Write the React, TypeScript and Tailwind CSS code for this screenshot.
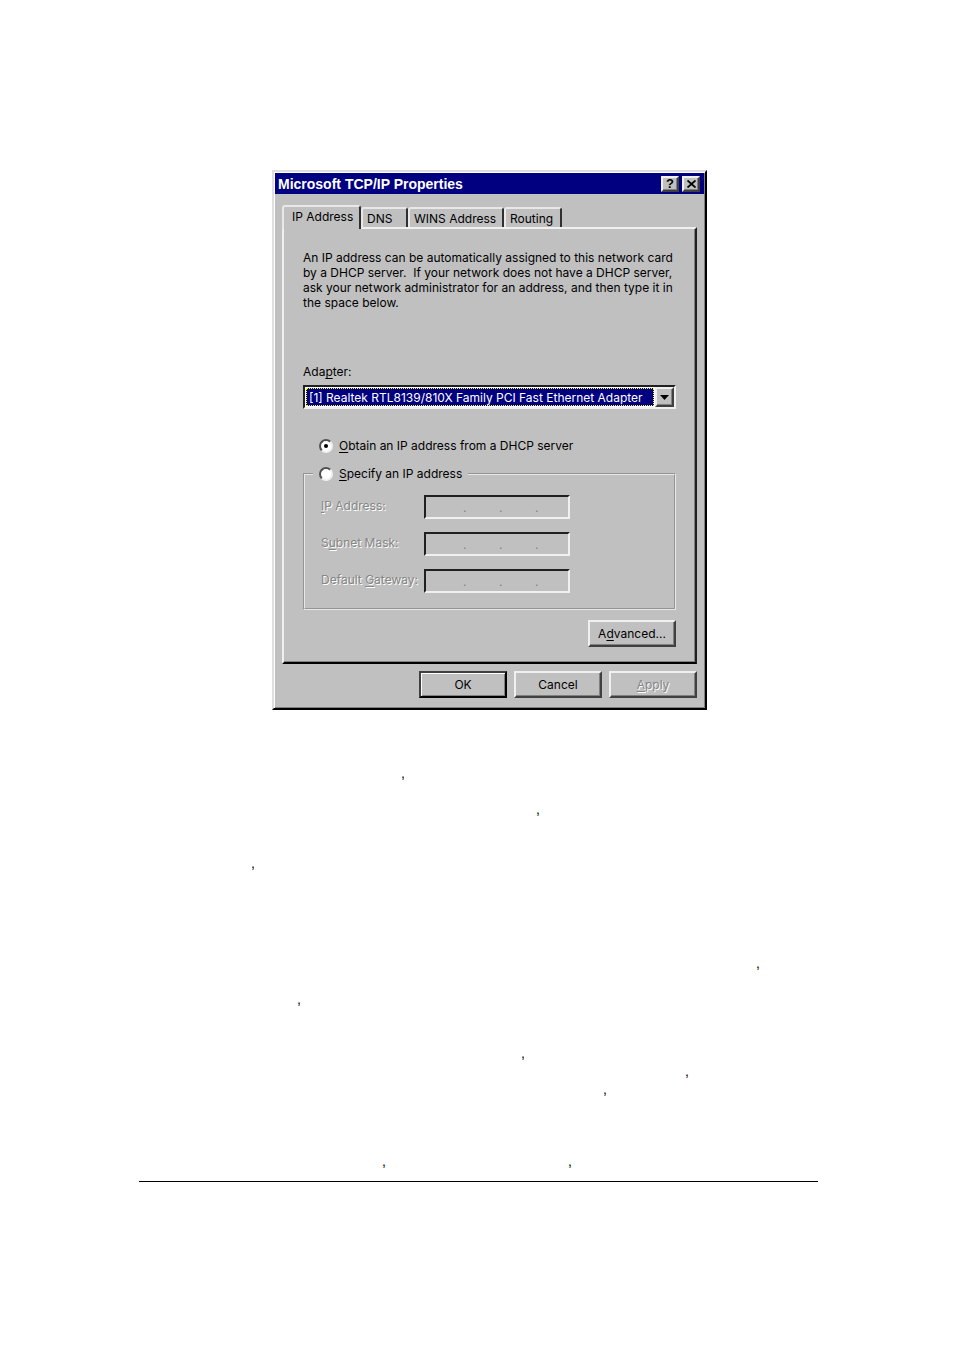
import { useState } from "react";
import clsx from "clsx";

const raised = "border-2 border-t-[#f0f0f0] border-l-[#f0f0f0] border-r-[#404040] border-b-[#404040] shadow-[inset_-1px_-1px_0_#808080]";
const sunken = "border-2 border-t-[#202020] border-l-[#202020] border-r-[#f0f0f0] border-b-[#f0f0f0]";
const etched = "text-[#868686] [text-shadow:1px_1px_0_#ffffff]";

const tabs = [
  { label: "IP Address", width: "w-[79px]" },
  { label: "DNS", width: "w-[47px]" },
  { label: "WINS Address", width: "w-[96px]" },
  { label: "Routing", width: "w-[58px]" },
];

const fields = [
  { id: "ip", before: "", key: "I", after: "P Address:" },
  { id: "mask", before: "S", key: "u", after: "bnet Mask:" },
  { id: "gateway", before: "Default ", key: "G", after: "ateway:" },
];

// gap in front of every comma on a line, an empty list is a blank line
const noteLines: number[][] = [[262], [], [397], [], [], [112]];
const footLines: number[][] = [[617], [], [158], [], [], [382], [546], [464], [], [], [], [243, 182]];

function Lines({ lines }: { lines: number[][] }) {
  return (
    <div className="font-['Liberation_Sans',Arial,sans-serif] text-[14px] leading-[18px]">
      {lines.map((gaps, i) => (
        <p key={i} className="flex h-[18px]">
          {gaps.map((gap, j) => (
            <span key={j} style={{ marginLeft: gap }}>
              ,
            </span>
          ))}
        </p>
      ))}
    </div>
  );
}

function Key({ children }: { children: string }) {
  return <span className="underline underline-offset-2">{children}</span>;
}

function TitleBar() {
  return (
    <div className="flex h-[21px] items-center gap-[3px] bg-[#000080] pl-[3px] pr-1 font-['Liberation_Sans',Arial,sans-serif]">
      <h1 className="flex-1 text-[14px] font-bold leading-[18px] text-white">Microsoft TCP/IP Properties</h1>
      <button aria-label="Help" className={clsx("flex h-4 w-[18px] items-center justify-center bg-[#c0c0c0] text-[13px] font-bold leading-3", raised)}>
        ?
      </button>
      <button aria-label="Close" className={clsx("flex h-4 w-[18px] items-center justify-center bg-[#c0c0c0]", raised)}>
        <svg width="9" height="8" viewBox="0 0 9 8" stroke="#000" strokeWidth="1.8">
          <path d="M0.5 0.5L8.5 7.5M8.5 0.5L0.5 7.5" />
        </svg>
      </button>
    </div>
  );
}

function Octets({ id }: { id: string }) {
  return (
    <div className={clsx("flex h-[24px] w-[146px] items-center pl-1", sunken)}>
      {[0, 1, 2, 3].map((n) => (
        <div key={n} className="flex items-center text-[#808080]">
          <input id={`${id}-${n}`} aria-label={`Octet ${n + 1}`} disabled className="h-[18px] w-[33px] bg-transparent text-center" />
          {n < 3 && <span className="w-[3px]">.</span>}
        </div>
      ))}
    </div>
  );
}

export default function App() {
  const [tab, setTab] = useState(0);
  const [mode, setMode] = useState("dhcp");

  const radio = (value: string) => (
    <span className="relative flex size-[14px]">
      <input
        type="radio"
        name="mode"
        id={value}
        checked={mode === value}
        onChange={() => setMode(value)}
        className="size-[14px] appearance-none rounded-full border-2 border-b-[#f0f0f0] border-l-[#505050] border-r-[#f0f0f0] border-t-[#505050] bg-white"
      />
      {mode === value && <span className="pointer-events-none absolute left-[5px] top-[5px] size-1 rounded-full bg-black" />}
    </span>
  );

  return (
    <main className="min-h-screen bg-white pb-[169px] pl-[139px] pr-[136px] pt-[170px] font-[Inter,'Liberation_Sans',sans-serif] text-[12px] leading-[15px] text-black">
      <section className="ml-[133px] w-[435px] whitespace-nowrap border-2 border-b-black border-l-[#dfdfdf] border-r-black border-t-[#dfdfdf] bg-[#c0c0c0] p-px pb-[10px] shadow-[inset_1px_1px_0_#ffffff,inset_-1px_-1px_0_#808080]">
        <TitleBar />

        <div className="px-[7px] pt-[11px]">
          <div role="tablist" className="relative z-10 flex h-[22px] items-end">
            {tabs.map(({ label, width }, i) => (
              <button
                key={label}
                role="tab"
                aria-selected={tab === i}
                onClick={() => setTab(i)}
                className={clsx(
                  "rounded-t-[3px] border-l-2 border-r-2 border-t-2 border-l-[#e8e8e8] border-r-[#303030] border-t-[#e8e8e8] bg-[#c0c0c0] text-left",
                  width,
                  tab === i ? "-mb-[2px] h-[24px] pb-[3px] pl-2" : "h-[20px] pl-1",
                  i === 1 && "border-l-0"
                )}
              >
                {label}
              </button>
            ))}
          </div>

          <div role="tabpanel" className="border-2 border-b-black border-l-[#f0f0f0] border-r-[#202020] border-t-[#f0f0f0] px-[19px] pb-[15px] pt-[21px] shadow-[inset_-1px_-1px_0_#808080]">
            <p>
              An IP address can be automatically assigned to this network card
              <br />
              by a DHCP server.&nbsp; If your network does not have a DHCP server,
              <br />
              ask your network administrator for an address, and then type it in
              <br />
              the space below.
            </p>

            <label htmlFor="adapter" className="mt-[54px] block">
              Ada<Key>p</Key>ter:
            </label>
            <div className={clsx("relative mt-[6px] h-[24px] bg-white p-px", sunken)}>
              <select id="adapter" className="block h-[18px] w-[348px] appearance-none border border-dotted border-[#ffff00] bg-[#000080] pl-[2px] text-white">
                <option>[1] Realtek RTL8139/810X Family PCI Fast Ethernet Adapter</option>
              </select>
              <span className={clsx("pointer-events-none absolute right-0 top-0 flex h-5 w-[19px] items-center justify-center bg-[#c0c0c0]", raised)}>
                <svg width="9" height="5" viewBox="0 0 9 5">
                  <path d="M0 0H9L4.5 5Z" />
                </svg>
              </span>
            </div>

            <div className="mt-[29px] flex items-center gap-[6px] pl-4">
              {radio("dhcp")}
              <label htmlFor="dhcp">
                <Key>O</Key>btain an IP address from a DHCP server
              </label>
            </div>

            <fieldset className="mt-[13px] h-[144px] pl-4 [border:2px_groove_#e8e8e8]">
              <legend className="-ml-2 flex items-center gap-[6px] px-[6px]">
                {radio("specify")}
                <label htmlFor="specify">
                  <Key>S</Key>pecify an IP address
                </label>
              </legend>
              <div className="mt-[14px] flex flex-col gap-[13px]">
                {fields.map(({ id, before, key, after }) => (
                  <div key={id} className="flex items-center">
                    <label htmlFor={`${id}-0`} className={clsx("w-[103px] pb-[3px]", etched)}>
                      {before}
                      <Key>{key}</Key>
                      {after}
                    </label>
                    <Octets id={id} />
                  </div>
                ))}
              </div>
            </fieldset>

            <div className="mt-[10px] flex justify-end">
              <button className={clsx("h-[27px] w-[88px]", raised)}>
                A<Key>d</Key>vanced...
              </button>
            </div>
          </div>

          <div className="mt-[7px] flex justify-end gap-[7px]">
            <button className="h-[27px] w-[88px] border-2 border-b-black border-l-[#404040] border-r-black border-t-[#404040] shadow-[inset_1px_1px_0_#ffffff,inset_-1px_-1px_0_#808080]">
              OK
            </button>
            <button className={clsx("h-[27px] w-[88px]", raised)}>Cancel</button>
            <button disabled className={clsx("h-[27px] w-[88px]", raised, etched)}>
              <Key>A</Key>pply
            </button>
          </div>
        </div>
      </section>

      <div className="mt-[54px]">
        <Lines lines={noteLines} />
      </div>
      <div className="mt-[82px] border-b border-black pb-[11px]">
        <Lines lines={footLines} />
      </div>
    </main>
  );
}
